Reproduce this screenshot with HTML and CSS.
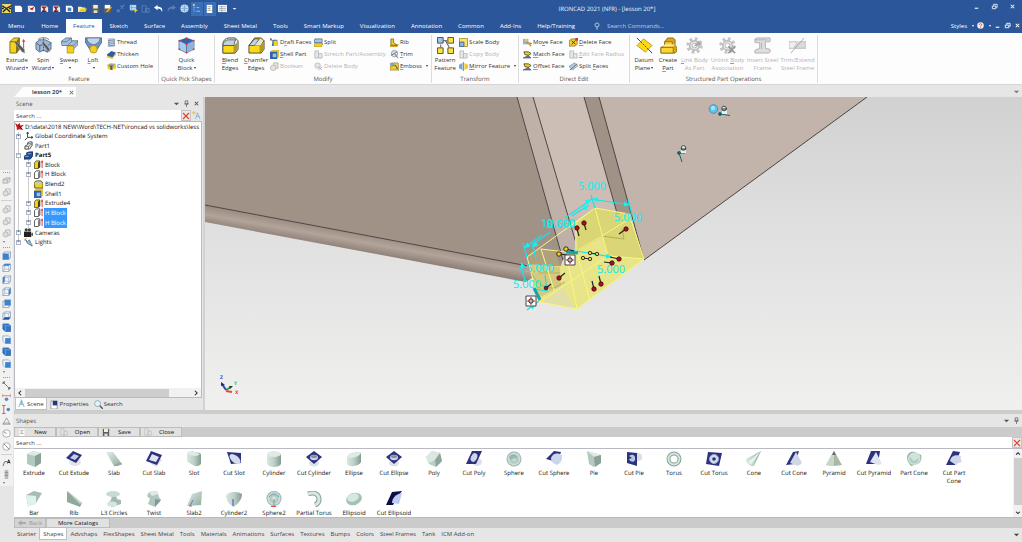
FILE: index.html
```html
<!DOCTYPE html>
<html lang="en">
<head>
<meta charset="utf-8">
<title>IRONCAD 2021 (NFR) - [lesson 20*]</title>
<link rel="stylesheet" href="styles.css">
</head>
<body>
<svg class="sprite" aria-hidden="true">
  <defs>
    <linearGradient id="gm" x1="0" x2="1"><stop offset="0" stop-color="#d9e8e1"/><stop offset=".5" stop-color="#bdd0c8"/><stop offset="1" stop-color="#849a91"/></linearGradient>
    <linearGradient id="gl" x1="0" y1="0" x2="1" y2="1"><stop offset="0" stop-color="#dff0e9"/><stop offset="1" stop-color="#92a99f"/></linearGradient>
    <radialGradient id="gs" cx=".5" cy=".5" r=".5"><stop offset="0" stop-color="#e6f3ee"/><stop offset=".45" stop-color="#a9c6bd"/><stop offset=".75" stop-color="#cfe2db"/><stop offset="1" stop-color="#8fa79e"/></radialGradient>
  </defs>
  <!-- quick access -->
  <symbol id="q-app" viewBox="0 0 10 10"><path d="M0 0h10v10H0z" fill="#e8d96a"/><path d="M0 2l5 3 5-3M1 9l4-4 4 4M0 5h2M8 5h2" stroke="#222" stroke-width="1.500" fill="none"/></symbol>
  <symbol id="q-new" viewBox="0 0 10 10"><path d="M1 2h6l2 2v5H1z" fill="#fff"/></symbol>
  <symbol id="q-red" viewBox="0 0 10 10"><path d="M1 2h6l2 2v5H1z" fill="#f4eeee"/><path d="M2 3l2 2 4-2-2 4-2-1z" fill="#b3141c"/></symbol>
  <symbol id="q-sig" viewBox="0 0 10 10"><path d="M1 2h6l2 2v5H1z" fill="#f1e6e0"/><path d="M7 3.500H3L5 5.500 3 8h4" stroke="#8c1218" stroke-width="1.500" fill="none"/></symbol>
  <symbol id="q-blue" viewBox="0 0 10 10"><path d="M1 2h6l2 2v5H1z" fill="#fff"/><path d="M3 4h4v4H3z" fill="#4583ba"/></symbol>
  <symbol id="q-open" viewBox="0 0 10 10"><path d="M0 3h4l1 1h3v5H0z" fill="#fff0a0"/><path d="M1 9l2-4h7L8 9z" fill="#f2c92c"/></symbol>
  <symbol id="q-save" viewBox="0 0 10 10"><path d="M1 1h8v9H1z" fill="#5c6066"/><path d="M2.500 1h5v4h-5z" fill="#f7eecd"/><path d="M3 7h4v3H3z" fill="#ddd"/></symbol>
  <symbol id="q-savea" viewBox="0 0 10 10"><path d="M1 1h8v9H1z" fill="#5c6066"/><path d="M2 1h6v4H2z" fill="#fff"/><path d="M3 9l5-6 2 1-5 5z" fill="#e2b331"/></symbol>
  <symbol id="q-dim" viewBox="0 0 10 10"><path d="M1 9l3-3M5 5l4-4M5 2l3 3M1 6l3 3" stroke="#5a80b3" stroke-width="1.500" fill="none"/></symbol>
  <symbol id="q-pick" viewBox="0 0 10 10"><path d="M1 1h7v6H1z" fill="#bcdcf4"/><path d="M3 0v8M0 4h8" stroke="#5a9cd0" stroke-width=".7"/><path d="M5 5l5 2-2 1-1 2z" fill="#f3c736"/></symbol>
  <symbol id="q-dim2" viewBox="0 0 10 10"><path d="M1 2h5v7H1zM5 5h4v4H5z" fill="none" stroke="#5a80b3"/></symbol>
  <symbol id="q-undo" viewBox="0 0 10 10"><path d="M0 4l4-3v2c4 0 6 2 5 6C8 6 7 5 4 5v2z" fill="#fff"/></symbol>
  <symbol id="q-redo" viewBox="0 0 10 10"><path d="M10 4L6 1v2C2 3 0 5 1 9c1-3 2-4 5-4v2z" fill="#5a80b3"/></symbol>
  <symbol id="q-globe" viewBox="0 0 10 10"><circle cx="5" cy="5" r="4.500" fill="#c8deef"/><path d="M5 .5v9M.5 5h9M2 2c2 2 4 2 6 0M2 8c2-2 4-2 6 0" stroke="#6f9dc6" stroke-width=".7" fill="none"/></symbol>
  <symbol id="q-tree" viewBox="0 0 10 10"><path d="M2 2v6h2M2 4h2" stroke="#7eaee0" fill="none" stroke-width=".7"/><path d="M5 4h3M5 8h4" stroke="#9ac6ef" fill="none"/><path d="M1 0h2v2H1z" fill="#ecd35d"/></symbol>
  <symbol id="q-doc" viewBox="0 0 10 10"><path d="M2 1h6v9H2z" fill="#fff"/><path d="M3 3h4M3 5h3M3 7h4" stroke="#a59d84"/></symbol>
  <symbol id="q-list" viewBox="0 0 10 10"><path d="M0 1h10v8H0z" fill="#f6f6f6"/><path d="M1 3h8M1 5h8M1 7h8M4 2v7" stroke="#8a98aa" stroke-width=".7"/></symbol>
  <!-- window -->
  <symbol id="w-min" viewBox="0 0 8 8"><path d="M2 6h4" stroke="currentColor" stroke-width="1.300"/></symbol>
  <symbol id="w-res" viewBox="0 0 8 8"><path d="M1.500 3.500h4v3h-4zM3 3V1.500h4V5H6" stroke="currentColor" fill="none"/></symbol>
  <symbol id="w-x" viewBox="0 0 8 8"><path d="M2 2l4 4M6 2L2 6" stroke="currentColor" stroke-width="1.200"/></symbol>
  <symbol id="w-pin" viewBox="0 0 8 8"><path d="M2.500 1h3v3.500h-3zM1.500 4.500h5M4 4.500V8" stroke="currentColor" fill="none" stroke-width=".8"/></symbol>
  <symbol id="w-dn" viewBox="0 0 8 8"><path d="M1 3h6L4 6z" fill="currentColor"/></symbol>
  <symbol id="w-l" viewBox="0 0 8 8"><path d="M5.500 1L2.500 4l3 3" stroke="currentColor" fill="none" stroke-width="1.400"/></symbol>
  <symbol id="w-r" viewBox="0 0 8 8"><path d="M2.500 1l3 3-3 3" stroke="currentColor" fill="none" stroke-width="1.400"/></symbol>
  <symbol id="w-u" viewBox="0 0 8 8"><path d="M1.500 5.500L4 3l2.500 2.500" stroke="currentColor" fill="none" stroke-width="1.400"/></symbol>
  <symbol id="w-d" viewBox="0 0 8 8"><path d="M1.500 3L4 5.500 6.500 3" stroke="currentColor" fill="none" stroke-width="1.400"/></symbol>
  <symbol id="w-back" viewBox="0 0 8 8"><path d="M0 4l3.500-3v2H8v2H3.500v2z" fill="#aaa"/></symbol>
  <symbol id="w-bulb" viewBox="0 0 8 8"><circle cx="4" cy="3" r="2" stroke="#cfdcf0" fill="none" stroke-width=".8"/><path d="M3 6h2M3.500 7.200h1" stroke="#cfdcf0" stroke-width=".8"/></symbol>
  <symbol id="w-help" viewBox="0 0 8 8"><circle cx="4" cy="4" r="3.700" fill="#f4ecec"/><path d="M2.700 3.200c0-1.800 2.700-1.600 2.600 0C5.200 4.200 4 4 4 5.200M4 6v.8" stroke="#d8453e" fill="none"/></symbol>
  <symbol id="w-red" viewBox="0 0 8 8"><path d="M1 1l6 6M7 1L1 7" stroke="#e2452f" stroke-width="1.200"/></symbol>
  <!-- large ribbon -->
  <symbol id="b-ext" viewBox="0 0 18 18"><path d="M1 5l4-4h6v12l-3 4H1z" fill="#f5d21c" stroke="#5c5424" stroke-width=".8"/><path d="M1 5h7v12M8 5l3-4" stroke="#5c5424" fill="none" stroke-width=".8"/><path d="M8 5l3-4v12l-3 4z" fill="#7f7121"/><path d="M15.500 3v11" stroke="#d8343c"/><path d="M13.800 5l1.700-3 1.700 3z" fill="#d8343c"/><path d="M7 4l9 9 1 4-3-1-8-10z" fill="#555" stroke="#bbb" stroke-width=".6"/></symbol>
  <symbol id="b-spin" viewBox="0 0 18 18"><path d="M1 6l4-3h6l6 3v7l-4 3-4-2-4 2-4-3z" fill="#9fb9da" stroke="#3f526c" stroke-width=".8"/><path d="M1 6l4 3 4-1 4 2 4-4M5 9v6M13 10v6" stroke="#3f526c" fill="none" stroke-width=".8"/><path d="M9 1v15" stroke="#b8323a" stroke-dasharray="2 1"/><path d="M3 3c3-3 9-3 12 0" stroke="#777" fill="none"/><path d="M9 5l6 7 1 4-3-2-6-8z" fill="#555" stroke="#ccc" stroke-width=".5"/></symbol>
  <symbol id="b-sweep" viewBox="0 0 18 18"><path d="M0 8V5l5-4h6v3h7v4l-5 5H7V9H1z" fill="#a4bfdd" stroke="#50647e" stroke-width=".8"/><path d="M0 5h6l5-4M7 9l5-5M13 9l5-5M7 9h6" stroke="#50647e" fill="none" stroke-width=".7"/><path d="M6.500 9.500h7V17h-7z" fill="#f5cf1e" stroke="#a58a1c" stroke-width=".7"/></symbol>
  <symbol id="b-loft" viewBox="0 0 18 18"><path d="M0 1h18v4l-5 8H5L0 5z" fill="#6f94c4" stroke="#41597b" stroke-width=".8"/><path d="M2 1h14c0 4-4 7-7 7S2 5 2 1z" fill="#c3d5ec" stroke="#41597b" stroke-width=".7"/><circle cx="9" cy="13" r="4" fill="#f5cf1e" stroke="#a58a1c" stroke-width=".8"/></symbol>
  <symbol id="b-quick" viewBox="0 0 18 18"><path d="M1 4l8-3 8 3v9l-8 4-8-4z" fill="#a9c9ea" stroke="#59779b" stroke-width=".8"/><path d="M1 4l8-3 8 3-8 4z" fill="#3463a8"/><path d="M9 8l8-4v9l-8 4z" fill="#8db3dc"/><path d="M9 8v9" stroke="#59779b"/><g fill="#e12f3a"><circle cx="1.500" cy="4" r="1"/><circle cx="9" cy="1.300" r="1"/><circle cx="16.500" cy="4" r="1"/><circle cx="9" cy="8" r="1"/><circle cx="9" cy="16.500" r="1"/><circle cx="16.500" cy="13" r="1"/><circle cx="1.500" cy="13" r="1"/></g></symbol>
  <symbol id="b-blend" viewBox="0 0 18 18"><path d="M1 7c0-3 3-6 6-6h7l3 3v9l-3 4H1z" fill="#e9ecef" stroke="#4a4a3c"/><path d="M1 9h12v8H1z" fill="#fbd917" stroke="#4a4a3c" stroke-width=".8"/><path d="M1 9c0-4 3-5 5-6h9c-2 1-2 3-2 6z" fill="#c0d2e4" stroke="#4a4a3c" stroke-width=".8"/><path d="M13 9l3.500-4v8L13 17z" fill="#b99b18"/></symbol>
  <symbol id="b-cham" viewBox="0 0 18 18"><path d="M1 9l6-8h7l3 3v9l-3 4H1z" fill="#fbd917" stroke="#4a4a3c"/><path d="M1 9l6-7h5L7 9z" fill="#c0d2e4" stroke="#4a4a3c" stroke-width=".8"/><path d="M7 9h6v8M13 9l4-5" stroke="#4a4a3c" fill="none" stroke-width=".8"/><path d="M13 9l3.500-4v8L13 17z" fill="#b99b18"/><path d="M7 9l6-7 3 2-3 5z" fill="#dfe5ea"/></symbol>
  <symbol id="b-pat" viewBox="0 0 18 18"><path d="M6 4h5M4 8v3M9 4l4 7" stroke="#444"/><path d="M.5.500h6v6h-6z" fill="#a6c3e6" stroke="#3b4b63"/><path d="M11.500.5h6v6h-6zM.5 11.500h6v6h-6zM11.500 11.500h6v6h-6z" fill="#fbe04b" stroke="#5a5220"/></symbol>
  <symbol id="b-datum" viewBox="0 0 18 18"><path d="M1 1l16 16" stroke="#333"/><path d="M1 9l7-7 9 7-7 7z" fill="#fbd917" stroke="#a18c1c" stroke-width=".8"/><path d="M5 5l8 8" stroke="#5a5220" stroke-dasharray="2 1"/></symbol>
  <symbol id="b-create" viewBox="0 0 18 18"><path d="M5 5l3-4h6l2 2v6l2 2v4l-2 2H1v-6l4-2z" fill="#d9a916" stroke="#6e5812" stroke-width=".8"/><path d="M5 5h8v4H5zM1 11h13v6H1z" fill="#fbd434" stroke="#6e5812" stroke-width=".7"/><path d="M2 10l3-2h11l-2 2z" fill="#fdeaa0"/></symbol>
  <symbol id="b-gear" viewBox="0 0 18 18"><circle cx="9" cy="9" r="7" fill="none" stroke="#c4c4c4" stroke-width="3.500" stroke-dasharray="3 2.500"/><circle cx="9" cy="9" r="5" fill="#e7e7e7" stroke="#b7b7b7" stroke-width="1.500"/><circle cx="9" cy="9" r="2.500" fill="#fff" stroke="#b7b7b7"/></symbol>
  <symbol id="b-link" viewBox="0 0 18 18"><use href="#b-gear"/><path d="M8 10l5-6 4 4-4 1z" fill="#aaa"/></symbol>
  <symbol id="b-unlink" viewBox="0 0 18 18"><use href="#b-gear"/><path d="M10 10l7 7M17 10l-7 7" stroke="#989898" stroke-width="1.800"/></symbol>
  <symbol id="b-ibeam" viewBox="0 0 18 18"><path d="M1 2l3-1h13v4h-5v7l5 1v3l-2 1H1v-3l5-2V6H1z" fill="#dedede" stroke="#b0b0b0"/><path d="M8 6v7M1 3h13" stroke="#b0b0b0"/></symbol>
  <symbol id="b-trim" viewBox="0 0 18 18"><path d="M0 5h9l-4 7H0z" fill="#eee" stroke="#bdbdbd"/><path d="M11 5h7v7H6z" fill="#d9d9d9" stroke="#bdbdbd"/><path d="M2 17L16 1" stroke="#aaa"/></symbol>
  <!-- small ribbon -->
  <symbol id="s-thread" viewBox="0 0 10 10"><path d="M2 1h6v8H2z" fill="#dbe6f2" stroke="#6c88a8" stroke-width=".7"/><path d="M1 3l8-1M1 5l8-1M1 7l8-1M1 9l8-1" stroke="#6c88a8"/></symbol>
  <symbol id="s-thick" viewBox="0 0 10 10"><path d="M0 5l5-4 5 2-4 6-6-2z" fill="#2f5d9f"/><path d="M0 6l6 2 4-5v2L6 10 0 8z" fill="#e8be2c"/></symbol>
  <symbol id="s-hole" viewBox="0 0 10 10"><path d="M0 3l4-2 6 1v5L6 9 1 8z" fill="#f1cd2e"/><ellipse cx="5" cy="4" rx="3.500" ry="2" fill="#8da6c4"/><path d="M3 4h3v5H4z" fill="#6a6330"/></symbol>
  <symbol id="s-draft" viewBox="0 0 10 10"><path d="M3 2h5l1 7H2z" fill="#3e6fae"/><path d="M4 3h4l1 6H4z" fill="#f4d02b"/><path d="M0 1l3 2M1 0v3" stroke="#555"/></symbol>
  <symbol id="s-shell" viewBox="0 0 10 10"><path d="M0 2l2-2h8v7l-2 3H0z" fill="#e1c33a"/><path d="M0 2h8v8H0z" fill="#2f62a8"/><path d="M3 4h4v4H3z" fill="#9ec0e8"/></symbol>
  <symbol id="s-bool" viewBox="0 0 10 10"><path d="M4 1h5v6H4z" fill="#ddd" stroke="#bbb"/><circle cx="3.500" cy="6.500" r="3" fill="#e4e4e4" stroke="#bbb"/></symbol>
  <symbol id="s-split" viewBox="0 0 10 10"><path d="M1 1h8v4H0z" fill="#a9c6e8" stroke="#46668f" stroke-width=".8"/><path d="M1 6h9L8 10H0z" fill="#f1cb2c" stroke="#907719" stroke-width=".6"/></symbol>
  <symbol id="s-grey" viewBox="0 0 10 10"><path d="M1 1h4v8H1zM5 4h4v5H5z" fill="#e6e6e6" stroke="#bcbcbc"/></symbol>
  <symbol id="s-del" viewBox="0 0 10 10"><circle cx="4" cy="4" r="3" fill="#e6e6e6" stroke="#bcbcbc"/><path d="M5 5l4 4M9 5L5 9" stroke="#aaa"/></symbol>
  <symbol id="s-rib" viewBox="0 0 10 10"><path d="M0 8l6-1h4l-2 3H0z" fill="#d0a428"/><path d="M1 1h3v4l4 3H1z" fill="#f0cc30" stroke="#665515" stroke-width=".8"/></symbol>
  <symbol id="s-trim" viewBox="0 0 10 10"><circle cx="5" cy="4" r="3.500" fill="#dde3e9" stroke="#8e99a6"/><path d="M1 6l7-4M5 4l4 5" stroke="#5f6e80"/></symbol>
  <symbol id="s-emb" viewBox="0 0 10 10"><path d="M0 2l3-1h6l1 8H0z" fill="#f1cb2c" stroke="#786418" stroke-width=".6"/><path d="M2 5c2-3 6-1 6 3" stroke="#333" fill="none"/><path d="M0 1h5v3H0z" fill="#7fa4d4"/></symbol>
  <symbol id="s-scale" viewBox="0 0 10 10"><path d="M.5.500h9v9h-9z" fill="#fbe36a" stroke="#a8922a"/><path d="M.5 4.500h5v5h-5z" fill="#8fb1de" stroke="#46668f"/></symbol>
  <symbol id="s-mir" viewBox="0 0 10 10"><path d="M4 1v8L0 7V3z" fill="#7fa4d4"/><path d="M6 1v8l4-2V3z" fill="#f1cb2c"/><path d="M5 0v10" stroke="#555" stroke-width=".7"/></symbol>
  <symbol id="s-move" viewBox="0 0 10 10"><path d="M0 1h6v6H0z" fill="#8fb1de"/><path d="M2 1h3v3H2z" fill="#f1cb2c"/><path d="M4 5l5 1-2 1 2 2" stroke="#c48c1c" stroke-width="1.500" fill="none"/></symbol>
  <symbol id="s-match" viewBox="0 0 10 10"><path d="M1 2h5l3 2-3 2-4-1z" fill="#f1cb2c" stroke="#333" stroke-width=".8"/><path d="M0 9h9L6 6z" fill="#4b7cbc" stroke="#333" stroke-width=".5"/></symbol>
  <symbol id="s-face" viewBox="0 0 10 10"><path d="M0 3l3-2h6v6L7 9H0z" fill="#f1cb2c" stroke="#6e5812" stroke-width=".7"/><path d="M3 3l4 4M7 3L3 7" stroke="#333"/><path d="M7 0h3v3H7z" fill="#c43c30"/></symbol>
  <symbol id="s-spf" viewBox="0 0 10 10"><path d="M0 5l6-4 4 3-6 5z" fill="#b4cbe6" stroke="#68819f" stroke-width=".7"/><path d="M1 9L9 2" stroke="#8a5a4a"/></symbol>
  <!-- tree -->
  <symbol id="t-root" viewBox="0 0 10 10"><path d="M0 1l3 2 2-2 1 3 4-1-3 3 2 3-4-1-3 1V6z" fill="#c3191e"/><path d="M4 4l4 4" stroke="#5a0b0e"/></symbol>
  <symbol id="t-axis" viewBox="0 0 10 10"><path d="M4 0v6h6M4 6L1 9M3 2l1-2 1 2M8 5l2 1-2 1" stroke="#333" fill="none"/></symbol>
  <symbol id="t-part" viewBox="0 0 10 10"><path d="M1 6l3-2V2l2-1h3v4L6 9H1z" fill="#eee" stroke="#444"/><path d="M1 6h4v3M5 6l4-3M4 3h4" stroke="#444" fill="none" stroke-width=".7"/></symbol>
  <symbol id="t-part5" viewBox="0 0 10 10"><path d="M0 6l3-2V2l3-1h4v4L7 9H0z" fill="#1f4f9c" stroke="#1a2e52"/><path d="M1 6h4M4 3h4" stroke="#7fb0ec"/></symbol>
  <symbol id="t-blk" viewBox="0 0 10 10"><path d="M.5 3l2-2h4v7l-2 1.500h-4z" fill="#f3cf1e" stroke="#3a3515" stroke-width=".8"/><path d="M4.500 3l2-2v7l-2 1.500z" fill="#3a3515"/><path d="M9 1v8" stroke="#d33"/><path d="M7.800 3L9 0l1 3z" fill="#d33"/></symbol>
  <symbol id="t-hblk" viewBox="0 0 10 10"><path d="M.5 3l2-2h4v7l-2 1.500h-4z" fill="#fff" stroke="#333" stroke-width=".9"/><path d="M4.500 3l2-2v7l-2 1.500z" fill="#777"/><path d="M9 1v8" stroke="#d33"/><path d="M7.800 3L9 0l1 3z" fill="#d33"/></symbol>
  <symbol id="t-blend" viewBox="0 0 10 10"><path d="M0 4c0-2 2-3 4-3h4l2 3v5H1z" fill="#f3cf1e" stroke="#554b15"/><path d="M1 4c1-2 3-2 4-2h3L6 5z" fill="#b9cee6"/></symbol>
  <symbol id="t-cam" viewBox="0 0 10 10"><path d="M0 4h8v6H0z" fill="#222"/><circle cx="2.500" cy="2" r="1.800" fill="#444"/><circle cx="6" cy="2" r="1.800" fill="#444"/><path d="M8 6l2-1v4L8 8z" fill="#555"/></symbol>
  <symbol id="t-light" viewBox="0 0 10 10"><path d="M1 1l3 3 2-2 3 7-5-3z" fill="#9cbcde" stroke="#34689f" stroke-width=".8"/><path d="M0 3l3-3M7 5l3 4" stroke="#d9a33a"/></symbol>
  <symbol id="t-scene" viewBox="0 0 10 10"><path d="M5 1L2 9M5 1l3 8M3 6h4M5 1v5" stroke="#7fb4cf" fill="none"/></symbol>
  <symbol id="t-opt" viewBox="0 0 10 10"><path d="M6 2L4 9M6 2l3 7M5 6h3" stroke="#7fb4cf" fill="none"/><path d="M0 2h4M2 0v4" stroke="#e3bb45"/></symbol>
  <symbol id="t-prop" viewBox="0 0 10 10"><path d="M1 1h7v9H1z" fill="#fff" stroke="#999"/><path d="M3 1h5v5H3z" fill="#1e3c7d"/></symbol>
  <symbol id="t-find" viewBox="0 0 10 10"><circle cx="4" cy="4" r="3.300" fill="#e6f2f8" stroke="#86a9bb"/><path d="M6.500 6.500L10 10" stroke="#555" stroke-width="1.500"/></symbol>
  <!-- rail -->
  <symbol id="r-box" viewBox="0 0 10 10"><path d="M1 4l3-2h5v4L6 8H1z" fill="#ddd" stroke="#b5b5b5"/><path d="M1 4h5l3-2M6 4v4" stroke="#b5b5b5" fill="none"/></symbol>
  <symbol id="r-bool" viewBox="0 0 10 10"><path d="M4 1h5v6H4z" fill="#e8e8e8" stroke="#b5b5b5"/><circle cx="4" cy="6" r="2.800" fill="#ddd" stroke="#b5b5b5"/></symbol>
  <symbol id="c-w" viewBox="0 0 10 10"><path d="M1 3l2-2h6.500v6l-2 2.500H1z" fill="#f7fafd" stroke="#7f94b4" stroke-width=".8"/><path d="M1 3h6.500v6.500M7.500 3l2-2M3 1v6h6M3 7L1 9.500" stroke="#7f94b4" fill="none" stroke-width=".6"/></symbol>
  <symbol id="c-1" viewBox="0 0 10 10"><use href="#c-w"/><path d="M1 3h6.500v6.500H1z" fill="#3b83cf"/></symbol>
  <symbol id="c-2" viewBox="0 0 10 10"><use href="#c-w"/><path d="M1 3l2-2h6.500l-2 2z" fill="#3b83cf"/></symbol>
  <symbol id="c-3" viewBox="0 0 10 10"><use href="#c-w"/><path d="M1 3l2-2v6L1 9.500z" fill="#3b83cf"/></symbol>
  <symbol id="c-4" viewBox="0 0 10 10"><use href="#c-w"/><path d="M7.500 3l2-2v6l-2 2.500z" fill="#3b83cf"/></symbol>
  <symbol id="c-5" viewBox="0 0 10 10"><use href="#c-w"/><path d="M3 1h6.500v6H3z" fill="#3b83cf"/></symbol>
  <symbol id="c-6" viewBox="0 0 10 10"><use href="#c-w"/><path d="M1 9.500L3 7h6.500l-2 2.500z" fill="#1e55a0"/></symbol>
  <symbol id="c-7" viewBox="0 0 10 10"><path d="M1 1h6l2.500 2v6.500H4L1 7z" fill="#2f77c5" stroke="#1e55a0" stroke-width=".7"/><path d="M1 1l3 2h5M4 3v6" stroke="#8fbbe9" fill="none" stroke-width=".6"/></symbol>
  <symbol id="c-8" viewBox="0 0 10 10"><path d="M1 1h6l2.500 2v6.500H4L1 7z" fill="#eef4fb" stroke="#7f94b4" stroke-width=".7"/><path d="M3.500 3.500h6v6h-6z" fill="#3b83cf"/></symbol>
  <symbol id="d-1" viewBox="0 0 10 10"><path d="M2 2l6 6" stroke="#777"/><path d="M0 3l3-3M7 10l3-3" stroke="#555"/><circle cx="2" cy="2" r="1" fill="#555"/><circle cx="8" cy="8" r="1" fill="#555"/></symbol>
  <symbol id="d-2" viewBox="0 0 10 10"><path d="M0 3h10M0 1v4M10 1v4" stroke="#e37763"/><circle cx="5" cy="7" r="2" fill="#4a8fd1"/></symbol>
  <symbol id="d-3" viewBox="0 0 10 10"><path d="M2 0v10M0 .5h4M0 9.500h4" stroke="#d8543e"/><circle cx="7" cy="5" r="2" fill="#4a8fd1"/></symbol>
  <symbol id="d-4" viewBox="0 0 10 10"><path d="M1 8L5 1l4 7zM1 8c3-2 5-2 8 0" stroke="#888" fill="none" stroke-width=".8"/></symbol>
  <symbol id="d-5" viewBox="0 0 10 10"><circle cx="5" cy="5" r="4.200" fill="#fafafa" stroke="#999" stroke-width=".8"/><path d="M5 5L2 3" stroke="#888"/></symbol>
  <symbol id="d-6" viewBox="0 0 10 10"><circle cx="5" cy="5" r="4.200" fill="#fafafa" stroke="#999" stroke-width=".8"/><path d="M2 2l6 6" stroke="#888"/></symbol>
  <symbol id="d-7" viewBox="0 0 10 10"><path d="M1 9l2-5h3" stroke="#666" fill="none"/><path d="M6 6l1.500-4L9 6M6.500 5h2" stroke="#222" fill="none"/></symbol>
  <symbol id="d-8" viewBox="0 0 10 10"><path d="M3 0h4v10H3z" fill="#bbb"/><path d="M3 3h4M3 6h4" stroke="#888"/></symbol>
  <!-- catalog shapes -->
  <symbol id="p-ext" viewBox="0 0 16 16"><path d="M1 3l6-3 8 2v10l-6 4-8-3z" fill="#b3c8be"/><path d="M1 3l6-3 8 2-6 3z" fill="#dcebe4"/><path d="M9 5l6-3v10l-6 4z" fill="#8ba197"/></symbol>
  <symbol id="p-slab" viewBox="0 0 16 16"><path d="M0 1h7l9 12-4 2H8z" fill="url(#gl)"/><path d="M8 15l4-2h4" stroke="#8aa095" fill="none"/></symbol>
  <symbol id="p-slot" viewBox="0 0 16 16"><path d="M1 2q4-3 8-1l5 1q1 1 1 2v9q-3 3-6 2l-6-3-2-2z" fill="url(#gm)"/><path d="M1 2q4-3 8-1l5 2q-2 2-5 2L3 4z" fill="#dcebe4"/></symbol>
  <symbol id="p-cyl" viewBox="0 0 16 16"><path d="M1 3v10c2 4 12 4 14 0V3z" fill="url(#gm)"/><ellipse cx="8" cy="3" rx="7" ry="3" fill="#dcebe4"/></symbol>
  <symbol id="p-ell" viewBox="0 0 16 16"><path d="M1 5v8c3 4 12 2 14-2V2z" fill="url(#gm)"/><path d="M1 6C2 1 11 0 15 1c0 4-8 7-14 5z" fill="#dcebe4"/></symbol>
  <symbol id="p-poly" viewBox="0 0 16 16"><path d="M0 6l6-6 8 2 2 8-6 6-7-3z" fill="#b9cec5"/><path d="M0 6l6-6 8 2-5 7-6 3z" fill="#d9e9e2"/><path d="M9 9l5-7 2 8-6 6z" fill="#8fa59b"/></symbol>
  <symbol id="p-sph" viewBox="0 0 16 16"><circle cx="8" cy="8" r="7.500" fill="url(#gs)"/><ellipse cx="7" cy="6" rx="4" ry="2.500" fill="#5f8d86" opacity=".35"/></symbol>
  <symbol id="p-pie" viewBox="0 0 16 16"><path d="M1 0l14 4-1 8-6 4-5-3z" fill="#b3c8be"/><path d="M1 0l14 4-7 2z" fill="#dcebe4"/><path d="M8 6l7-2v8l-6 4z" fill="#8ba197"/></symbol>
  <symbol id="p-tor" viewBox="0 0 16 16"><circle cx="8" cy="8" r="5.500" fill="none" stroke="#8aa397" stroke-width="4"/><circle cx="8" cy="8" r="5.500" fill="none" stroke="#d5e6de" stroke-width="2"/></symbol>
  <symbol id="p-cone" viewBox="0 0 16 16"><path d="M0 8L15 0 8 15C4 16 0 12 0 8z" fill="url(#gm)"/><path d="M2 11L15 0 5 14z" fill="#e6f3ed"/></symbol>
  <symbol id="p-pyr" viewBox="0 0 16 16"><path d="M8 0l8 14-8 1-8-1z" fill="#a9b9a8"/><path d="M8 0v15l-8-1z" fill="#c8d5c9"/><path d="M8 0l2 4H6z" fill="#706a6c"/></symbol>
  <symbol id="p-pcone" viewBox="0 0 16 16"><path d="M1 6C2 1 6 0 9 1l6 3c1 4 0 7-3 9l-7 2C2 12 1 9 1 6z" fill="url(#gs)"/><ellipse cx="9" cy="5" rx="5" ry="3.500" fill="#d0e3da"/></symbol>
  <symbol id="c-a" viewBox="0 0 16 16"><ellipse cx="9" cy="11" rx="6" ry="4" fill="#e3e3ea"/><path d="M0 7l7-7 9 4-6 8z" fill="#2c3180"/><path d="M4 7l4-4 5 2-4 4z" fill="#c5cfe6"/></symbol>
  <symbol id="c-b" viewBox="0 0 16 16"><path d="M4 12l6 4 6-7-4-3z" fill="#dcdce4"/><path d="M0 10L5 0l11 4-5 10z" fill="#2c3180"/><path d="M3 9l3-6 7 3-3 5z" fill="#e1e4ee"/></symbol>
  <symbol id="c-c" viewBox="0 0 16 16"><path d="M1 1l14 1v10L5 13z" fill="#2c3180"/><ellipse cx="9" cy="8" rx="6.500" ry="3.500" transform="rotate(40 9 8)" fill="#d5dbea"/></symbol>
  <symbol id="c-d" viewBox="0 0 16 16"><ellipse cx="8" cy="12" rx="5" ry="3.500" fill="#dfe1e8"/><path d="M0 6l8-6 8 6-8 7z" fill="#2c3180"/><ellipse cx="8" cy="6.500" rx="4" ry="2.700" fill="#cdd6e6"/><ellipse cx="8" cy="5.500" rx="3" ry="1.500" fill="#83919f"/></symbol>
  <symbol id="c-e" viewBox="0 0 16 16"><ellipse cx="11" cy="11" rx="5" ry="4" fill="#dfe1e8"/><path d="M0 13L6 0h10l-6 13z" fill="#2c3180"/><ellipse cx="8" cy="6.500" rx="3" ry="4.500" transform="rotate(25 8 6.500)" fill="#ced7ea"/></symbol>
  <symbol id="c-f" viewBox="0 0 16 16"><path d="M0 8l8-8 7 1-4 10z" fill="#2c3180"/><path d="M5 7c2-6 8-5 11-3 1 5-2 9-5 10-3-1-6-3-6-7z" fill="#ccd6ea"/></symbol>
  <symbol id="c-g" viewBox="0 0 16 16"><circle cx="12" cy="6" r="4" fill="#dddde3"/><path d="M1 1l10 1v13L1 12z" fill="#2c3180"/><path d="M3 5c4-3 7 0 6 4-1 3-5 2-6-1l3-1z" fill="#b7c7e2"/></symbol>
  <symbol id="c-h" viewBox="0 0 16 16"><path d="M2 1l14 1-3 13L0 13z" fill="#2c3180"/><circle cx="8" cy="8" r="4.500" fill="#d3dcec" stroke="#9daccb"/><circle cx="8" cy="8" r="1.800" fill="#2c3180"/></symbol>
  <symbol id="c-i" viewBox="0 0 16 16"><path d="M0 14L7 1l6-1-4 13z" fill="#2c3180"/><path d="M4 12l6-11 6 11-4 3z" fill="#cfd7e7"/></symbol>
  <symbol id="c-j" viewBox="0 0 16 16"><path d="M0 13L5 0h9l-2 13z" fill="#2c3180"/><path d="M4 11l6-10 6 12-4 1z" fill="#dfe5f0"/></symbol>
  <symbol id="c-k" viewBox="0 0 16 16"><path d="M0 14L7 0l7 1-5 13z" fill="#2c3180"/><path d="M4 10c1-5 5-7 11-5-1 2 0 4 1 6l-4 1-2 2z" fill="#cdd7ea"/></symbol>
  <symbol id="c-l" viewBox="0 0 16 16"><path d="M0 14L6 1l10-1-3 4-6 10z" fill="#0b0f45"/><path d="M6 12C6 7 10 3 16 2l-3 11z" fill="#bccdf2"/></symbol>
  <symbol id="p-bar" viewBox="0 0 16 16"><path d="M0 4l8-4 8 2-6 10-8 3z" fill="#a7bdb3"/><path d="M0 4l10 1v8l-8 3z" fill="#def2f0"/></symbol>
  <symbol id="p-rib" viewBox="0 0 16 16"><path d="M1 0l15 12-2 4L1 11z" fill="#91a89d"/><path d="M1 0l2 1 13 11-2 1z" fill="#c4d8ce"/></symbol>
  <symbol id="p-l3" viewBox="0 0 16 16"><path d="M6 4l4 0 1 4 4 1v4l-9 3-5-3 4-4z" fill="#a3bab0"/><ellipse cx="7" cy="3" rx="7" ry="3" fill="#c7dbd1"/><ellipse cx="6" cy="13" rx="5" ry="2.500" fill="#d6e6de"/></symbol>
  <symbol id="p-twist" viewBox="0 0 16 16"><path d="M3 1l8-1 2 6 2 3-6 7-7-3 2-5-3-3z" fill="#b1c6bc"/><path d="M3 1l8-1 1 3-6 2z" fill="#dcebe4"/><path d="M9 8l6 1-6 7z" fill="#8098a0"/></symbol>
  <symbol id="p-slab2" viewBox="0 0 16 16"><path d="M6 3l10-3-1 14-14 1z" fill="url(#gl)"/><path d="M4 15l3-6" stroke="#5d80d0"/><path d="M3 15h3" stroke="#e05c4a"/></symbol>
  <symbol id="p-cyl2" viewBox="0 0 16 16"><path d="M0 5C2 0 12 0 16 3c0 6-4 9-8 13C4 14 0 10 0 5z" fill="url(#gm)"/><path d="M7 15V8" stroke="#2e55d8"/></symbol>
  <symbol id="p-sph2" viewBox="0 0 16 16"><circle cx="8" cy="7.500" r="7.500" fill="url(#gs)"/><path d="M3 6c3-4 7-4 10 0M8 15V8" stroke="#6d9bb0" fill="none"/><path d="M5 15.500h5" stroke="#e04a3a"/></symbol>
  <symbol id="p-ptor" viewBox="0 0 16 16"><path d="M2 3c8-3 11 2 11 5s-1 5-4 6" stroke="#8aa095" stroke-width="5" fill="none"/><path d="M2 3c8-3 11 2 11 5s-1 5-4 6" stroke="#d7e6df" stroke-width="3" fill="none"/></symbol>
  <symbol id="p-elo" viewBox="0 0 16 16"><ellipse cx="8" cy="8" rx="8" ry="6" transform="rotate(-20 8 8)" fill="#a5c0b4"/><ellipse cx="7" cy="6.500" rx="6" ry="4" transform="rotate(-20 7 6.500)" fill="#d5e8df"/></symbol>
</svg>

<header class="title">
  <div class="quick">
    <button aria-label="IRONCAD"><svg><use href="#q-app"/></svg></button>
    <button aria-label="New"><svg><use href="#q-new"/></svg></button>
    <button aria-label="New scene"><svg><use href="#q-red"/></svg></button>
    <button aria-label="New drawing"><svg><use href="#q-sig"/></svg></button>
    <button aria-label="New sheet"><svg><use href="#q-sig"/></svg></button>
    <button aria-label="Export"><svg><use href="#q-blue"/></svg></button>
    <button aria-label="Open"><svg><use href="#q-open"/></svg></button>
    <button aria-label="Save"><svg><use href="#q-save"/></svg></button>
    <button aria-label="Save as"><svg><use href="#q-savea"/></svg></button>
    <button aria-label="Link"><svg><use href="#q-dim"/></svg></button>
    <button aria-label="Select"><svg><use href="#q-pick"/></svg></button>
    <button aria-label="Copy"><svg><use href="#q-dim2"/></svg></button>
    <button aria-label="Undo"><svg><use href="#q-undo"/></svg></button>
    <button aria-label="Redo"><svg><use href="#q-redo"/></svg></button>
    <button aria-label="Render"><svg><use href="#q-globe"/></svg></button>
    <button class="on" aria-label="Scene browser"><svg><use href="#q-tree"/></svg></button>
    <button class="on" aria-label="Catalog browser"><svg><use href="#q-doc"/></svg></button>
    <button aria-label="Properties"><svg><use href="#q-list"/></svg></button>
    <button aria-label="Customize"><svg class="sm"><use href="#w-dn"/></svg></button>
  </div>
  <h1>IRONCAD 2021 (NFR) - [lesson 20*]</h1>
  <div class="win">
    <button aria-label="Minimize"><svg><use href="#w-min"/></svg></button>
    <button aria-label="Restore"><svg><use href="#w-res"/></svg></button>
    <button aria-label="Close"><svg><use href="#w-x"/></svg></button>
  </div>
</header>

<nav class="menu">
  <button>Menu</button><button>Home</button><button class="active">Feature</button><button>Sketch</button><button>Surface</button><button>Assembly</button><button>Sheet Metal</button><button>Tools</button><button>Smart Markup</button><button>Visualization</button><button>Annotation</button><button>Common</button><button>Add-Ins</button><button>Help/Training</button>
  <label class="command"><svg><use href="#w-bulb"/></svg><input type="text" placeholder="Search Commands..." aria-label="Search Commands"></label>
  <div class="styles">
    <button>Styles <i class="caret"></i></button>
    <button aria-label="Help"><svg><use href="#w-help"/></svg> <i class="caret"></i></button>
    <button aria-label="Minimize document"><svg><use href="#w-min"/></svg></button>
    <button aria-label="Restore document"><svg><use href="#w-res"/></svg></button>
    <button aria-label="Close document"><svg><use href="#w-x"/></svg></button>
  </div>
</nav>

<section class="ribbon">
  <div class="group">
    <div class="tools">
      <button class="big"><svg><use href="#b-ext"/></svg>Extrude<br>Wizard<i class="caret"></i></button>
      <button class="big"><svg><use href="#b-spin"/></svg>Spin<br>Wizard<i class="caret"></i></button>
      <button class="big"><svg><use href="#b-sweep"/></svg><span><u>S</u>weep</span><br><i class="caret"></i></button>
      <button class="big slim"><svg><use href="#b-loft"/></svg><span><u>L</u>oft</span><br><i class="caret"></i></button>
      <div class="stack">
        <button><svg><use href="#s-thread"/></svg>Thread</button>
        <button><svg><use href="#s-thick"/></svg>Thicken</button>
        <button><svg><use href="#s-hole"/></svg>Custom Hole</button>
      </div>
    </div>
    <h2>Feature</h2>
  </div>
  <div class="group pick">
    <div class="tools"><button class="big"><svg><use href="#b-quick"/></svg>Quick<br>Block<i class="caret"></i></button></div>
    <h2>Quick Pick Shapes</h2>
  </div>
  <div class="group modify">
    <div class="tools">
      <button class="big"><svg><use href="#b-blend"/></svg><span><u>B</u>lend</span><br>Edges</button>
      <button class="big"><svg><use href="#b-cham"/></svg><span><u>C</u>hamfer</span><br>Edges</button>
      <div class="stack w44">
        <button><svg><use href="#s-draft"/></svg><span>D<u>r</u>aft Faces</span></button>
        <button><svg><use href="#s-shell"/></svg><span><u>S</u>hell Part</span></button>
        <button disabled><svg><use href="#s-bool"/></svg>Boolean</button>
      </div>
      <div class="stack w76">
        <button><svg><use href="#s-split"/></svg>Split</button>
        <button disabled><svg><use href="#s-grey"/></svg>Stretch Part/Assembly</button>
        <button disabled><svg><use href="#s-del"/></svg>Delete Body</button>
      </div>
      <div class="stack">
        <button><svg><use href="#s-rib"/></svg>Rib</button>
        <button><svg><use href="#s-trim"/></svg><span><u>T</u>rim</span></button>
        <button><svg><use href="#s-emb"/></svg><span><u>E</u>mboss</span> <i class="caret"></i></button>
      </div>
    </div>
    <h2>Modify</h2>
  </div>
  <div class="group transform">
    <div class="tools">
      <button class="big"><svg><use href="#b-pat"/></svg>Pattern<br>Feature</button>
      <div class="stack">
        <button><svg><use href="#s-scale"/></svg>Scale Body</button>
        <button disabled><svg><use href="#s-grey"/></svg>Copy Body</button>
        <button><svg><use href="#s-mir"/></svg><span><u>M</u>irror Feature</span> <i class="caret"></i></button>
      </div>
    </div>
    <h2>Transform</h2>
  </div>
  <div class="group direct">
    <div class="tools">
      <div class="stack w46">
        <button><svg><use href="#s-move"/></svg><span>Mo<u>v</u>e Face</span></button>
        <button><svg><use href="#s-match"/></svg><span><u>M</u>atch Face</span></button>
        <button><svg><use href="#s-match"/></svg><span><u>O</u>ffset Face</span></button>
      </div>
      <div class="stack">
        <button><svg><use href="#s-face"/></svg><span><u>D</u>elete Face</span></button>
        <button disabled><svg><use href="#s-grey"/></svg><span><u>E</u>dit Face Radius</span></button>
        <button><svg><use href="#s-spf"/></svg><span>Split <u>F</u>aces</span></button>
      </div>
    </div>
    <h2>Direct Edit</h2>
  </div>
  <div class="group parts">
    <div class="tools">
      <button class="big"><svg><use href="#b-datum"/></svg>Datum<br>Plane<i class="caret"></i></button>
      <button class="big slim"><svg><use href="#b-create"/></svg>Create<br><span><u>P</u>art</span></button>
      <button class="big w31" disabled><svg><use href="#b-link"/></svg><span><u>L</u>ink Body</span><br>As Part</button>
      <button class="big w35" disabled><svg><use href="#b-unlink"/></svg><span>Unlink <u>B</u>ody</span><br>Association</button>
      <button class="big w35" disabled><svg><use href="#b-ibeam"/></svg>Insert Steel<br>Frame</button>
      <button class="big w35" disabled><svg><use href="#b-trim"/></svg>Trim/Extend<br>Steel Frame</button>
    </div>
    <h2>Structured Part Operations</h2>
  </div>
</section>

<div class="work">
  <aside class="rail">
    <div class="tray t1">
      <i class="grip"></i><svg><use href="#r-box"/></svg><svg><use href="#r-bool"/></svg><hr><svg><use href="#r-bool"/></svg><svg><use href="#r-bool"/></svg><svg><use href="#r-bool"/></svg><i class="caret"></i>
    </div>
    <div class="tray t2">
      <i class="grip"></i><svg><use href="#c-1"/></svg><svg><use href="#c-2"/></svg><svg><use href="#c-3"/></svg><svg><use href="#c-4"/></svg><svg><use href="#c-5"/></svg><svg><use href="#c-6"/></svg><svg><use href="#c-7"/></svg><svg><use href="#c-8"/></svg><svg><use href="#c-7"/></svg><svg><use href="#c-8"/></svg><i class="caret"></i>
    </div>
    <div class="tray t3">
      <i class="grip"></i><svg><use href="#d-1"/></svg><svg><use href="#d-2"/></svg><svg><use href="#d-3"/></svg><svg><use href="#d-4"/></svg><svg><use href="#d-5"/></svg><svg><use href="#d-6"/></svg><hr><svg><use href="#d-7"/></svg><svg><use href="#d-8"/></svg><i class="caret"></i>
    </div>
  </aside>

  <div class="content">
    <div class="docs">
      <button class="doc">lesson 20* <svg><use href="#w-x"/></svg></button>
      <button class="more" aria-label="Documents"><svg><use href="#w-dn"/></svg></button>
    </div>

    <main class="stage">
      <section class="scene">
        <header class="bar"><h2>Scene</h2><svg><use href="#w-dn"/></svg><svg><use href="#w-pin"/></svg><svg><use href="#w-x"/></svg></header>
        <div class="find"><input type="text" placeholder="Search ..." aria-label="Search scene"><button class="clear" aria-label="Clear search"><svg><use href="#w-red"/></svg></button><button class="opt" aria-label="Search options"><svg><use href="#t-opt"/></svg></button></div>
        <div class="treebox">
          <ul class="tree">
            <li class="root"><svg><use href="#t-root"/></svg>D:\data\2018 NEW\Word\TECH-NET\ironcad vs solidworks\less</li>
            <li><i class="ex">+</i><svg><use href="#t-axis"/></svg>Global Coordinate System</li>
            <li><i class="ex none"></i><svg><use href="#t-part"/></svg>Part1</li>
            <li><i class="ex">−</i><svg><use href="#t-part5"/></svg><b>Part5</b></li>
            <li class="sub"><i class="ex">+</i><svg><use href="#t-blk"/></svg>Block</li>
            <li class="sub"><i class="ex">+</i><svg><use href="#t-hblk"/></svg>H Block</li>
            <li class="sub"><i class="ex none"></i><svg><use href="#t-blend"/></svg>Blend2</li>
            <li class="sub"><i class="ex none"></i><svg><use href="#s-shell"/></svg>Shell1</li>
            <li class="sub"><i class="ex">+</i><svg><use href="#t-blk"/></svg>Extrude4</li>
            <li class="sub"><i class="ex">+</i><svg><use href="#t-hblk"/></svg><mark>H Block</mark></li>
            <li class="sub"><i class="ex">+</i><svg><use href="#t-hblk"/></svg><mark>H Block</mark></li>
            <li><i class="ex">+</i><svg><use href="#t-cam"/></svg>Cameras</li>
            <li class="last"><i class="ex">+</i><svg><use href="#t-light"/></svg>Lights</li>
          </ul>
          <div class="hscroll"><svg><use href="#w-l"/></svg><i></i><svg><use href="#w-r"/></svg></div>
        </div>
        <div class="panes">
          <button class="active"><svg><use href="#t-scene"/></svg>Scene</button><button><svg><use href="#t-prop"/></svg>Properties</button><button><svg><use href="#t-find"/></svg>Search</button>
        </div>
      </section>

      <section class="view">
        <svg viewBox="205 97 817 313" preserveAspectRatio="xMinYMin slice" role="img" aria-label="3D model view">
          <defs>
            <linearGradient id="sky" x1="0" y1="0" x2="0" y2="1"><stop offset="0" stop-color="#d1d1d1"/><stop offset=".4" stop-color="#dfdfdf"/><stop offset="1" stop-color="#f0f0ef"/></linearGradient>
            <linearGradient id="tube" gradientUnits="userSpaceOnUse" x1="366" y1="235" x2="363" y2="252"><stop offset="0" stop-color="#9d8f85"/><stop offset=".45" stop-color="#b3a49a"/><stop offset="1" stop-color="#8e8077"/></linearGradient>
            <g id="tgt"><path d="M-5-5H5V5H-5z" fill="#fff" stroke="#444"/><circle r="2.200" fill="#bbb" stroke="#222"/><path d="M-4 0h2M2 0h2M0-4v2M0 2v2" stroke="#e0222a"/></g>
            <path id="ah" d="M0 0l-6-2.500v5z" fill="#12f3f5"/>
          </defs>
          <path d="M205 97h817v313H205z" fill="url(#sky)"/>
          <path d="M205 97h312l46 163-12 32-23-26-323-61z" fill="#a09287"/>
          <path d="M205 205l323 61 10 8-12 8-321-60z" fill="url(#tube)"/>
          <path d="M517 97h17l44 155-15 8z" fill="#c0b1a8"/>
          <path d="M533 97h52l33 117-40 38z" fill="#cdbeb5"/>
          <path d="M584 97h16l32 117-8 6-7-8z" fill="#a09287"/>
          <path d="M599 97h268L644 260z" fill="#c3b4ab"/>
          <g fill="none" stroke="#4a4644"><path d="M205 205l323 61"/><path d="M517 97l46 163"/><path d="M533 97l45 153"/><path d="M584 97l33 116"/><path d="M599 97l45 163L867 97"/></g>
          <!-- selected block -->
          <path d="M595 208l34 6 15 45-67 50-38-7-10-36 32 0 14-17v-27z" fill="#e7e48a"/>
          <path d="M527 257l13-9 15 4 5 14-31 1z" fill="#b7a77b" fill-opacity=".7"/>
          <path d="M529 264l31 3 1 19-22 12z" fill="#d3ca80"/>
          <path d="M595 208l34 6 15 45-36-4-6-19-25 15v-28z" fill="#dad575"/>
          <path d="M540 302l22-15 10 17 5 5z" fill="#e2dea8"/>
          <path d="M530 270q8 20 24 18l11-6M577 250l25-14 22 3-2-10M539 273h21" stroke="#b3ad5e" fill="none"/>
          <path d="M595 208l34 6 15 45-67 50-38-7-12-45zM595 208l13 48 36 3M540 302l68-46M541 249l13 41M541 249l25 3 11 57M576 250l14 50M577 250l25-14 27-17" fill="none" stroke="#faf77c"/>
          <!-- dimension lines -->
          <g stroke="#12e5ea" fill="none" stroke-width="1.200"><path d="M524 248l18-13M565 218l27-19M532 245l18-13M572 216l17-11M591 199l39 6M570 250l42 7M521 266l4 14M527 310l12-9M524 266l-5 4M591 195l4 13M628 200l4 14M523 243l4 14M532 243l4 16"/><path d="M545 275l2 16-12-2"/></g>
          <path d="M534 288l6 12M566 252l12 1" stroke="#12a7ad" stroke-width="3"/>
          <use href="#ah" transform="translate(524 248) rotate(144)"/><use href="#ah" transform="translate(591 199) rotate(-36)"/><use href="#ah" transform="translate(592 199) rotate(188)"/><use href="#ah" transform="translate(630 205) rotate(9)"/><use href="#ah" transform="translate(532 247) rotate(144)"/><use href="#ah" transform="translate(589 205) rotate(-36)"/><use href="#ah" transform="translate(612 257) rotate(9)"/><use href="#ah" transform="translate(521 262) rotate(-110)"/><use href="#ah" transform="translate(547 291) rotate(75)"/><use href="#ah" transform="translate(536 304) rotate(-36)"/>
          <g class="dims"><text x="578" y="190">5.000</text><text x="614" y="221">5.000</text><text x="541" y="227">10.000</text><text x="547" y="228">8.660</text><text x="526" y="272">5.000</text><text x="597" y="273">5.000</text><text x="513" y="288">5.000</text></g>
          <!-- constraints -->
          <g stroke="#222" stroke-width="1.200"><path d="M577 229l2 7M584 223l2 7M626 229l-7 5M619 259l-9-2M612 263l-8-1M559 278l6-5M545 289l6-5M594 289l-2-8M601 284l-2-8M560 254l7 1M566 249l8 2M590 253l8 1M583 258l7 1"/></g>
          <g fill="#b00d24" stroke="#31080c" stroke-width=".8"><circle cx="577" cy="228" r="2.200"/><circle cx="584" cy="223" r="2.200"/><circle cx="626" cy="229" r="2.200"/><circle cx="619" cy="259" r="2.200"/><circle cx="612" cy="263" r="2.200"/><circle cx="559" cy="278" r="2.200"/><circle cx="546" cy="288" r="1.800"/><circle cx="594" cy="289" r="2.200"/><circle cx="601" cy="284" r="2.200"/></g>
          <g fill="#f7cf1c" stroke="#222" stroke-width=".9"><circle cx="559" cy="254" r="2.200"/><circle cx="566" cy="249" r="2.200"/><circle cx="590" cy="253" r="1.700"/><circle cx="597" cy="254" r="1.700"/><circle cx="583" cy="258" r="1.700"/><circle cx="590" cy="259" r="1.700"/></g>
          <use href="#tgt" x="570" y="260"/><use href="#tgt" x="531" y="301"/>
          <!-- lights and cameras -->
          <circle cx="713.500" cy="109" r="4.300" fill="#55c9ee" stroke="#5d83bf"/><circle cx="713" cy="108" r="2" fill="#a5ecfb"/>
          <g stroke="#14686a" fill="#14686a"><path d="M720 114l10 1.500M679 153l3 9M680 153h5"/><circle cx="720" cy="114" r="1.400"/><circle cx="679" cy="153" r="1.400"/></g>
          <path d="M722 110h5v4h-5M681 150h5v3h-5" fill="#e8eeee"/>
          <g fill="#e8eeee" stroke="#32504f"><circle cx="724" cy="108.500" r="2.300"/><circle cx="683.500" cy="148" r="2.300"/></g><path d="M722 109h5M681 149h5" stroke="#222"/>
          <!-- axis triad -->
          <path d="M226 390l-4-6" stroke="#2c46c8" stroke-width="2"/><path d="M221 382l4 3-4 1z" fill="#1e2d6e"/><path d="M226 390l5-3" stroke="#23a044" stroke-width="2"/><path d="M229 386l4 0-3 3z" fill="#0e4b28"/><path d="M226 391l6 1" stroke="#e64a3e" stroke-width="2"/>
          <g class="axes"><text x="220" y="379" fill="#2c46e8">Z</text><text x="234" y="385" fill="#2fc25a">Y</text><text x="235" y="394" fill="#e6382e">X</text></g>
        </svg>
      </section>
    </main>

    <section class="dock">
      <header class="bar"><h2>Shapes</h2><svg><use href="#w-dn"/></svg><svg><use href="#w-pin"/></svg></header>
      <div class="files">
        <button><svg><use href="#q-doc"/></svg><span>New</span></button><button><svg><use href="#s-grey"/></svg><span>Open</span></button><button><svg><use href="#q-save"/></svg><span>Save</span></button><button><svg><use href="#s-grey"/></svg><span>Close</span></button>
      </div>
      <div class="find"><input type="text" placeholder="Search ..." aria-label="Search shapes"><button class="clear" aria-label="Clear search"><svg><use href="#w-red"/></svg></button></div>
      <div class="catalog">
        <ul class="shapes">
          <li><svg><use href="#p-ext"/></svg>Extrude</li>
          <li><svg><use href="#c-a"/></svg>Cut Extude</li>
          <li><svg><use href="#p-slab"/></svg>Slab</li>
          <li><svg><use href="#c-b"/></svg>Cut Slab</li>
          <li><svg><use href="#p-slot"/></svg>Slot</li>
          <li><svg><use href="#c-c"/></svg>Cut Slot</li>
          <li><svg><use href="#p-cyl"/></svg>Cylinder</li>
          <li><svg><use href="#c-d"/></svg>Cut Cylinder</li>
          <li><svg><use href="#p-ell"/></svg>Ellipse</li>
          <li><svg><use href="#c-d"/></svg>Cut Ellipse</li>
          <li><svg><use href="#p-poly"/></svg>Poly</li>
          <li><svg><use href="#c-e"/></svg>Cut Poly</li>
          <li><svg><use href="#p-sph"/></svg>Sphere</li>
          <li><svg><use href="#c-f"/></svg>Cut Sphere</li>
          <li><svg><use href="#p-pie"/></svg>Pie</li>
          <li><svg><use href="#c-g"/></svg>Cut Pie</li>
          <li><svg><use href="#p-tor"/></svg>Torus</li>
          <li><svg><use href="#c-h"/></svg>Cut Torus</li>
          <li><svg><use href="#p-cone"/></svg>Cone</li>
          <li><svg><use href="#c-i"/></svg>Cut Cone</li>
          <li><svg><use href="#p-pyr"/></svg>Pyramid</li>
          <li><svg><use href="#c-j"/></svg>Cut Pyramid</li>
          <li><svg><use href="#p-pcone"/></svg>Part Cone</li>
          <li><svg><use href="#c-k"/></svg>Cut Part<br>Cone</li>
          <li><svg><use href="#p-bar"/></svg>Bar</li>
          <li><svg><use href="#p-rib"/></svg>Rib</li>
          <li><svg><use href="#p-l3"/></svg>L3 Circles</li>
          <li><svg><use href="#p-twist"/></svg>Twist</li>
          <li><svg><use href="#p-slab2"/></svg>Slab2</li>
          <li><svg><use href="#p-cyl2"/></svg>Cylinder2</li>
          <li><svg><use href="#p-sph2"/></svg>Sphere2</li>
          <li><svg><use href="#p-ptor"/></svg>Partial Torus</li>
          <li><svg><use href="#p-elo"/></svg>Ellipsoid</li>
          <li><svg><use href="#c-l"/></svg>Cut Ellipsoid</li>
        </ul>
        <div class="vscroll"><svg><use href="#w-u"/></svg><i></i><svg><use href="#w-d"/></svg></div>
      </div>
      <div class="files nav"><button class="back" disabled><svg><use href="#w-back"/></svg><span>Back</span></button><button class="cats"><span>More Catalogs</span></button></div>
      <div class="tabs">
        <button>Starter</button><button class="active">Shapes</button><button>Advshaps</button><button>FlexShapes</button><button>Sheet Metal</button><button>Tools</button><button>Materials</button><button>Animations</button><button>Surfaces</button><button>Textures</button><button>Bumps</button><button>Colors</button><button>Steel Frames</button><button>Tank</button><button>ICM Add-on</button>
        <svg><use href="#w-dn"/></svg>
      </div>
    </section>
  </div>
</div>
</body>
</html>
```
FILE: styles.css
```css
* { box-sizing: border-box; }
html, body { height: 100%; }
body {
  margin: 0;
  display: flex;
  flex-direction: column;
  overflow: hidden;
  background: #e6e6e6;
  color: #222;
  font: 6px/8px "Open Sans", "Noto Sans", sans-serif;
  text-rendering: geometricPrecision;
}
button, input {
  font: inherit;
  color: inherit;
  background: none;
  border: 0;
  padding: 0;
  margin: 0;
  white-space: nowrap;
}
h1, h2 { margin: 0; font: inherit; }
ul { list-style: none; margin: 0; padding: 0; }
svg { display: block; flex: none; width: 9px; height: 9px; }
.sprite { position: absolute; width: 0; height: 0; }
u { text-underline-offset: 1px; text-decoration-color: #999; text-decoration-thickness: 1px; }
.caret {
  display: inline-block;
  border: 1px solid transparent;
  border-top: 2px solid currentColor;
  border-bottom: 0;
  margin-left: 1px;
  vertical-align: middle;
}

.title {
  display: flex;
  align-items: center;
  height: 17px;
  flex: none;
  background: #2b579a;
  color: #eef3fa;
}
.quick { display: flex; align-items: center; justify-content: space-between; width: 241px; height: 16px; }
.quick button { display: flex; align-items: center; justify-content: center; width: 12px; height: 14px; }
.quick .on { background: #3a6fb8; }
.quick .sm { width: 5px; height: 5px; }
.title h1 { flex: 1; text-align: center; padding-top: 1px; }
.win { display: flex; gap: 11px; padding: 0 6px 4px 0; }
.win svg, .styles svg { width: 7px; height: 7px; }

.menu {
  display: flex;
  align-items: stretch;
  height: 16px;
  flex: none;
  background: #2b579a;
  color: #fff;
}
.menu > button { padding: 2px 8px 0; }
.menu > button:first-child { margin-right: 1px; }
.menu > button.active { background: #fdfdfd; color: #2b579a; margin: 2px 0 0; padding: 0 7px; }
.command { display: flex; align-items: center; gap: 6px; padding: 2px 0 0 10px; }
.command svg { width: 8px; height: 8px; }
.command input { width: 80px; outline: 0; }
.command input::placeholder { color: #b9cae4; opacity: 1; }
.styles { display: flex; align-items: center; gap: 3px; margin-left: auto; padding: 1px 1px 0 0; }
.styles button { display: flex; align-items: center; gap: 4px; }

.ribbon {
  display: flex;
  height: 52px;
  flex: none;
  background: #fdfdfd;
  border-bottom: 1px solid #d5d5d5;
  color: #333;
}
.group {
  display: flex;
  flex-direction: column;
  align-items: center;
  margin: 2px 0 1px;
  padding: 0 4px;
  border-right: 1px solid #dcdcdc;
}
.tools { display: flex; align-items: flex-start; height: 40px; width: 100%; }
.group h2 { line-height: 8px; color: #555; white-space: nowrap; }
.big { width: 26px; line-height: 8px; padding-top: 2px; text-align: center; display: block; }
.big svg { width: 17px; height: 17px; margin: 0 auto 2px; }
.slim { width: 22px; }
.w31 { width: 31px; }
.w35 { width: 35px; }
.w44 { width: 44px; }
.w46 { width: 46px; }
.w76 { width: 76px; }
.stack { display: flex; flex-direction: column; padding-left: 3px; padding-top: 1px; }
.modify .stack { padding-left: 1px; }
.direct .stack { padding-left: 0; }
.stack button { display: flex; align-items: center; gap: 1px; height: 12px; }
.stack .caret { margin-left: 3px; }
button:disabled { color: #b4b4b4; }
.group:first-child { width: 159px; }
.pick { width: 56px; padding: 0; }
.pick .tools { justify-content: center; }
.modify { width: 217px; padding: 0 2px; }
.transform { width: 87px; padding: 0 2px; }
.direct { width: 111px; }
.parts { width: 188px; padding: 0 1px; }

.work { display: flex; flex: 1; min-height: 0; }
.rail { width: 14px; flex: none; padding: 85px 1px 0 0; color: #777; }
.tray {
  display: flex;
  flex-direction: column;
  align-items: center;
  justify-content: space-between;
  background: #f1f1f1;
  padding: 2px 0;
}
.tray hr { width: 11px; height: 1px; margin: 0; border: 0; background: #d0d0d0; }
.tray .caret { align-self: flex-start; margin-left: 3px; }
.t1 { height: 75px; }
.t2 { height: 130px; }
.t3 { height: 111px; }
.grip { width: 8px; height: 1px; background: repeating-linear-gradient(90deg, #999 0 1px, transparent 1px 2px); }

.content { display: flex; flex-direction: column; flex: 1; min-width: 0; }
.docs { display: flex; justify-content: space-between; height: 12px; flex: none; color: #666; }
.doc {
  display: flex;
  align-items: center;
  gap: 6px;
  margin-top: 2px;
  padding: 0 1px 0 18px;
  background: #fdfdfd;
  clip-path: polygon(9px 0, 100% 0, 100% 100%, 0 100%);
  color: #222;
  font-weight: 600;
}
.doc svg, .more svg { width: 7px; height: 7px; color: #777; }
.more { padding-right: 2px; }

.stage { display: flex; flex: 1; min-height: 0; }
.scene { display: flex; flex-direction: column; width: 191px; flex: none; border-right: 2px solid #d2d2d2; padding-right: 1px; }
.bar { display: flex; align-items: center; gap: 3px; height: 13px; flex: none; padding: 0 2px; color: #555; }
.bar h2 { flex: 1; }
.bar svg { width: 7px; height: 7px; }
.find { display: flex; height: 11px; flex: none; background: #fff; }
.find input { flex: 1; min-width: 0; padding-left: 2px; outline: 0; }
.find input::placeholder { color: #444; opacity: 1; }
.clear { display: grid; place-items: center; width: 10px; background: #e9e9e9; border: 1px solid #c5c5c5; }
.clear svg { width: 8px; height: 8px; }
.opt { display: grid; place-items: center; width: 11px; background: #e6e6e6; }
.treebox {
  display: flex;
  flex-direction: column;
  flex: 1;
  min-height: 0;
  background: #fff;
  border: 1px solid #b9b9c1;
}
.tree { display: grid; grid-auto-rows: 1fr; height: 125px; margin-bottom: auto; color: #111; }
.tree li { display: flex; align-items: center; gap: 2px; padding-left: 1px; white-space: nowrap; background: linear-gradient(#ccc, #ccc) 3px 0 / 1px 100% no-repeat; }
.tree li.root { background: none; gap: 1px; padding-left: 0; }
.tree .last { background-size: 1px 50%; }
.tree .sub { padding-left: 11px; background: linear-gradient(#ccc, #ccc) 3px 0 / 1px 100% no-repeat, linear-gradient(#ccc, #ccc) 13px 0 / 1px 100% no-repeat; }
.ex { width: 5px; height: 5px; margin-right: 1px; border: 1px solid #a9b4c4; background: #fff; font: 5px/3px "Open Sans", sans-serif; text-align: center; color: #345; }
.ex.none { border: 0; background: none; }
mark { background: #3399ff; color: #fff; line-height: 10px; padding: 0 1px; margin-left: -1px; }
.hscroll { display: flex; align-items: center; height: 9px; background: #f1f1f1; }
.hscroll i { flex: 1; margin-right: 22px; height: 8px; background: #cdcdcd; }
.hscroll svg { width: 8px; height: 6px; margin: 0 1px; }
.panes { display: flex; height: 12px; flex: none; padding-left: 1px; color: #333; }
.panes button { display: flex; align-items: center; gap: 1px; padding: 0 2px 0 1px; margin-right: 2px; }
.panes .active { background: #fff; border: 1px solid #c2c2c2; border-top: 0; }
.view { flex: 1; min-width: 0; background: #eee; }
.view svg { width: 100%; height: 100%; }
.dims { font: 11px "Noto Sans", sans-serif; fill: #12eaf0; }
.axes { font: bold 5px "Noto Sans", sans-serif; }

.dock { flex: none; border-top: 4px solid #cdcdcd; }
.files { display: flex; height: 10px; background: #cbcbcb; color: #111; }
.files button { display: flex; align-items: center; width: 42px; padding-left: 3px; background: #e1e1e1; border: 1px solid #bdbdbd; }
.files button span { flex: 1; text-align: center; }
.files svg { width: 8px; height: 8px; }
.dock .find { border-bottom: 1px solid #b9b9c1; height: 12px; }
.catalog { display: flex; height: 69px; background: #fff; border-bottom: 1px solid #b9b9c1; }
.shapes { flex: 1; display: grid; grid-template-columns: repeat(auto-fill, 40px); grid-auto-rows: 40px; overflow: hidden; color: #111; }
.shapes li { padding-top: 2px; text-align: center; white-space: nowrap; }
.shapes svg { width: 16px; height: 16px; margin: 0 auto 2px; }
.vscroll { display: flex; flex-direction: column; align-items: center; width: 9px; background: #f1f1f1; }
.vscroll i { flex: 1; width: 8px; margin-bottom: 3px; background: #cdcdcd; }
.vscroll svg { width: 6px; height: 9px; }
.files .back { width: 32px; color: #999; background: #d3d3d3; }
.files .cats { width: 64px; padding: 0; }
.tabs { display: flex; align-items: flex-start; height: 14px; color: #444; }
.tabs button { height: 12px; padding: 0 3px; }
.tabs .active { background: #fff; border: 1px solid #c2c2c2; border-top: 0; }
.tabs svg { width: 7px; height: 7px; margin: 3px 2px 0 auto; }
```
